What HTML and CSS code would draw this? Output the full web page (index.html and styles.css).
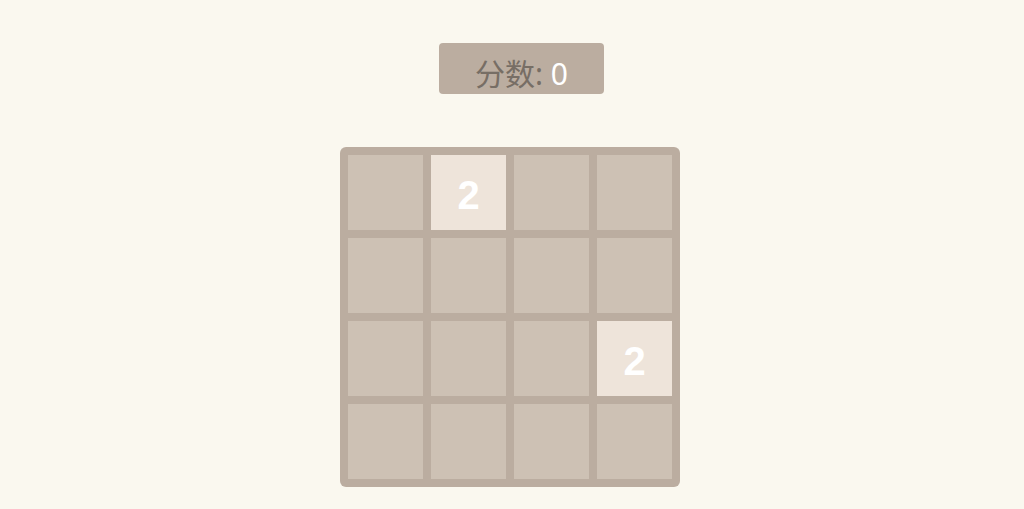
FILE: index.html
```html
<!DOCTYPE html>
<html lang="zh">
<head>
<meta charset="UTF-8">
<meta name="viewport" content="width=device-width, initial-scale=1.0">
<link rel="stylesheet" href="styles.css">
</head>
<body>
<div class="top">
    <div class="score"><span class="label">分数:</span> <span class="value">0</span></div>
</div>
<div class="board">
    <div class="cell"></div><div class="cell tile">2</div><div class="cell"></div><div class="cell"></div>
    <div class="cell"></div><div class="cell"></div><div class="cell"></div><div class="cell"></div>
    <div class="cell"></div><div class="cell"></div><div class="cell"></div><div class="cell tile">2</div>
    <div class="cell"></div><div class="cell"></div><div class="cell"></div><div class="cell"></div>
</div>
</body>
</html>
```
FILE: styles.css
```css
body {
    margin: 0;
    background-color: #faf8ef;
    font-family: "Noto Sans", "Noto Sans CJK SC", sans-serif;
}
.top {
    display: flex;
    padding-top: 43px;
    padding-left: 439px;
}
.score {
    width: 165px;
    height: 51px;
    box-sizing: border-box;
    padding-top: 10px;
    background-color: #bbada0;
    border-radius: 4px;
    font-size: 30px;
    line-height: 41px;
    text-align: center;
    color: #776e65;
}
.value {
    color: #fff;
}
.board {
    margin: 53px 0 0 340px;
    width: 340px;
    height: 340px;
    box-sizing: border-box;
    padding: 8px;
    background-color: #bbada0;
    border-radius: 6px;
    display: grid;
    grid-template-columns: repeat(4, 75px);
    grid-template-rows: repeat(4, 75px);
    gap: 8px;
}
.cell {
    background-color: #cdc1b4;
}
.tile {
    box-sizing: border-box;
    padding-top: 6px;
    background-color: #eee4da;
    color: #fff;
    font-family: "Liberation Sans", Arial, sans-serif;
    font-weight: bold;
    font-size: 40px;
    display: flex;
    align-items: center;
    justify-content: center;
}
```
